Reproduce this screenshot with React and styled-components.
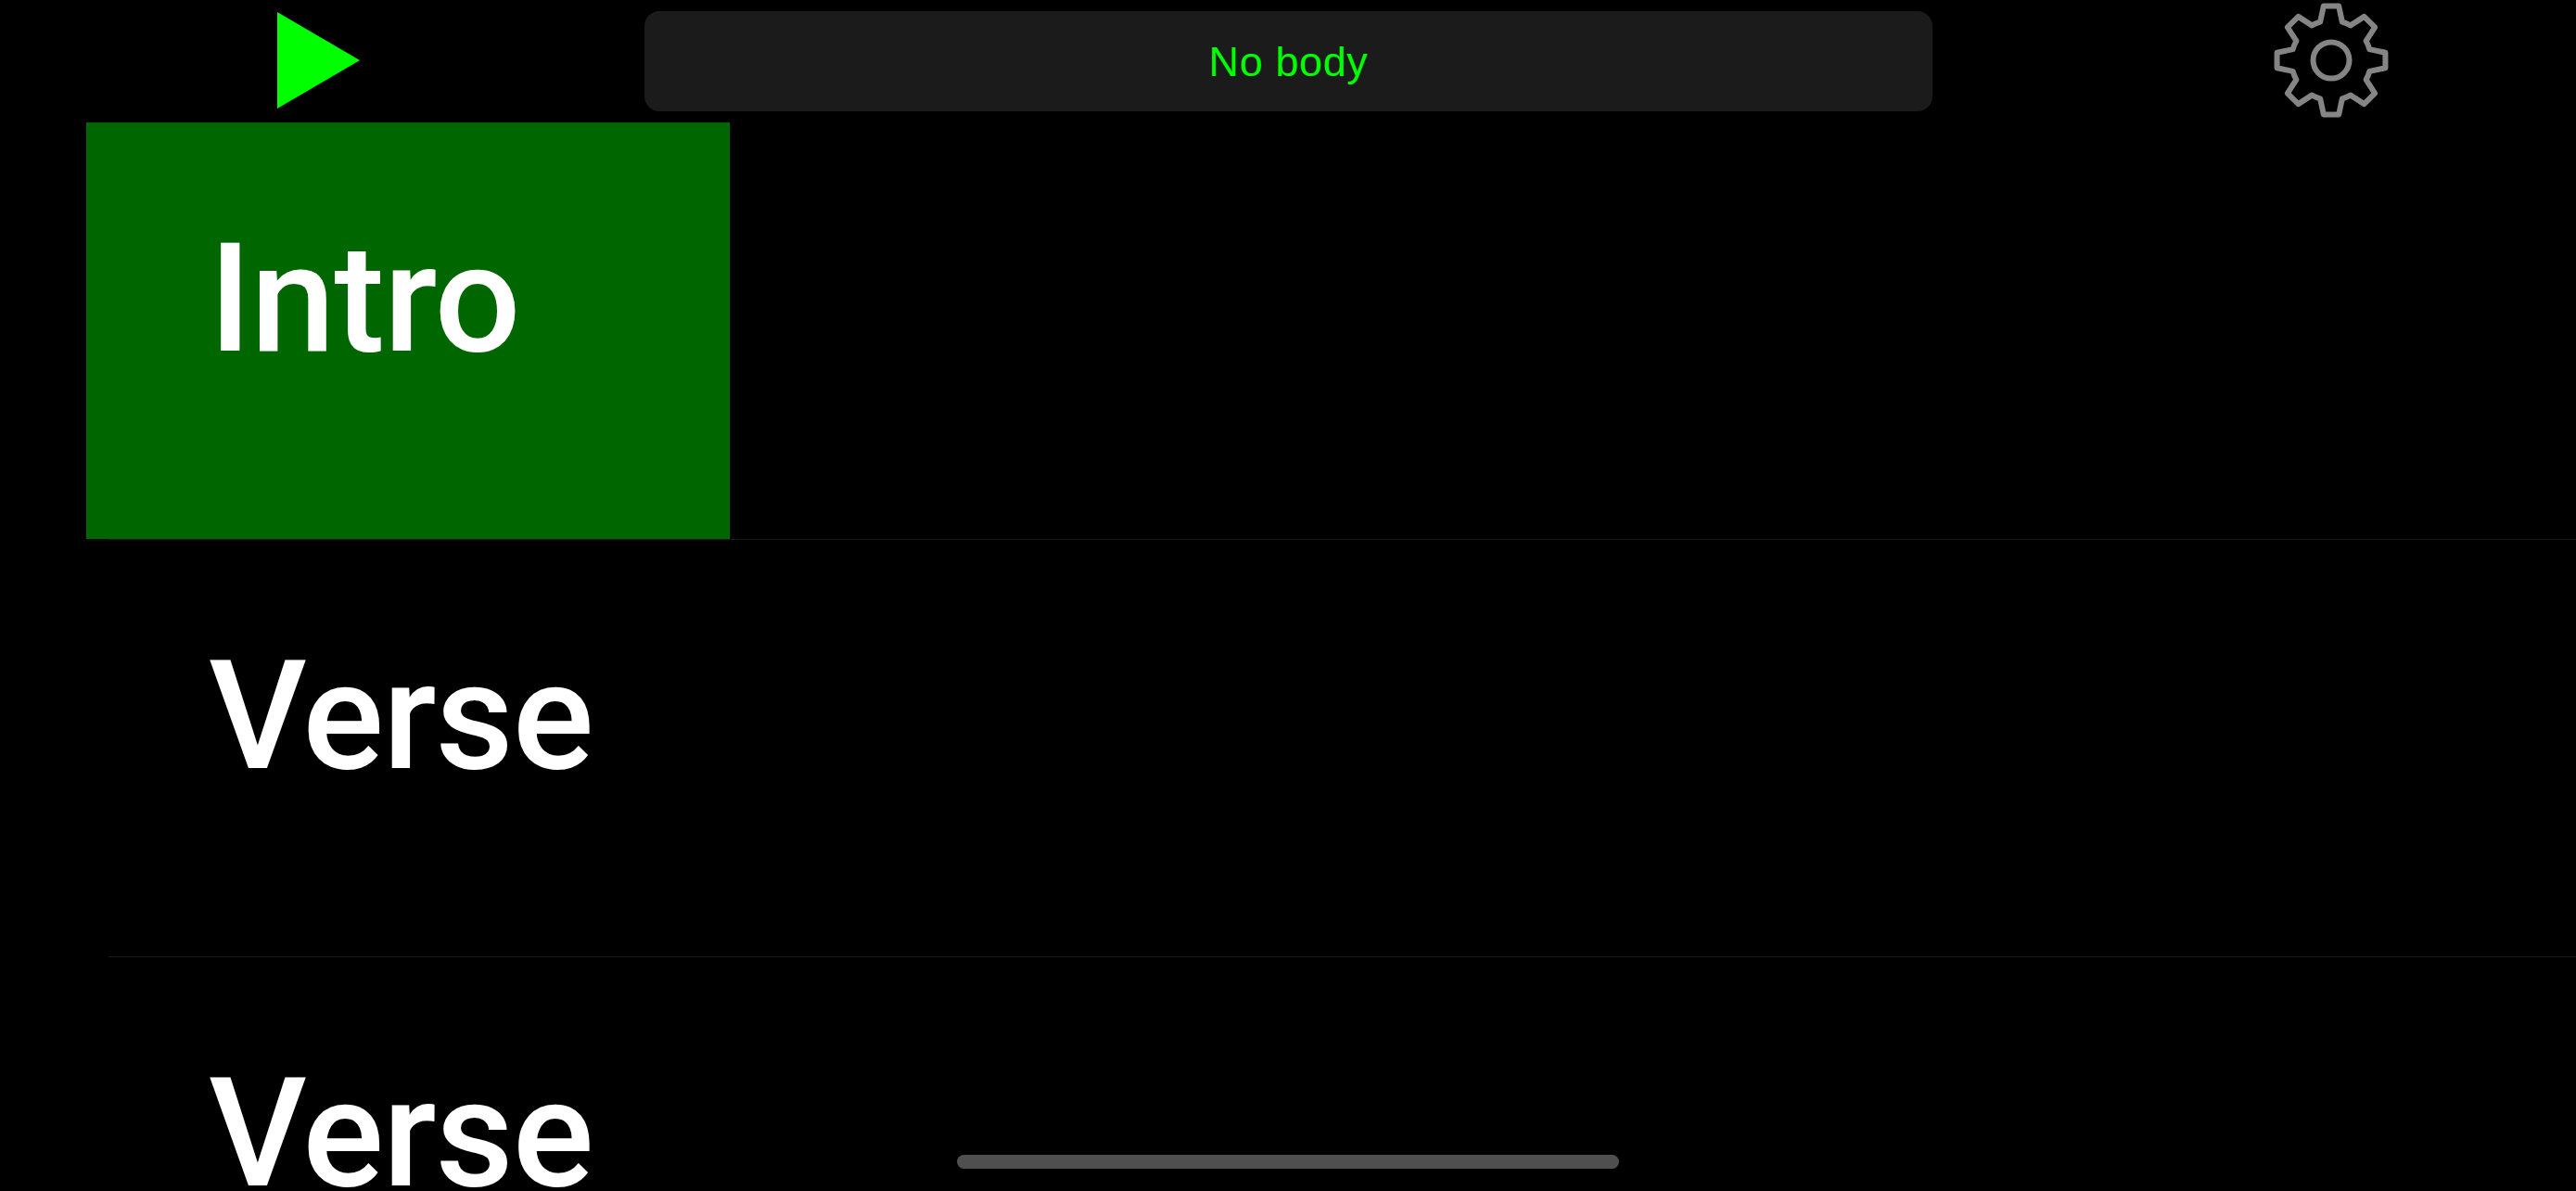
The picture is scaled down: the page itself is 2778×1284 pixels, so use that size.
import React from 'react'
import styled, { createGlobalStyle } from 'styled-components'

const GlobalStyle = createGlobalStyle`
  html, body {
    margin: 0;
    padding: 0;
    background: #000;
  }
`

const Screen = styled.div`
  position: relative;
  width: 2778px;
  height: 1284px;
  overflow: hidden;
  background: #000;
  font-family: "Liberation Sans", Arial, sans-serif;
`

const Toolbar = styled.header`
  display: grid;
  grid-template-columns: 695px 1389px 694px;
  align-items: center;
  height: 132px;
`

const PlayButton = styled.div`
  display: flex;
  padding: 0 0 2px 299px;
`

const BodyField = styled.div`
  display: flex;
  align-items: center;
  justify-content: center;
  height: 108px;
  padding-top: 1px;
  box-sizing: border-box;
  border-radius: 16px;
  background: #1b1b1b;
  color: #00ff00;
  font-size: 45px;
  letter-spacing: 0.6px;
`

const SettingsButton = styled.div`
  display: flex;
  justify-content: flex-end;
  padding: 0 200px 2px 0;
`

const SectionList = styled.main`
  margin-left: 93px;
`

const SectionRow = styled.div`
  position: relative;
  height: 450px;

  &::after {
    content: '';
    position: absolute;
    left: 24px;
    right: 0;
    bottom: 0;
    height: 1px;
    background: #1a1a1a;
  }
`

const SectionCell = styled.div`
  position: relative;
  z-index: 1;
  box-sizing: border-box;
  width: 694px;
  height: 449px;
  padding: 99px 0 0 132px;
  background: ${(p) => (p.$selected ? '#006600' : 'transparent')};
  color: #fff;
  font-family: Roboto, "Liberation Sans", sans-serif;
  font-weight: 500;
  font-size: 164px;
  line-height: 183px;
  letter-spacing: -1.2px;
`

const HomeBar = styled.div`
  position: absolute;
  left: 1032px;
  bottom: 24px;
  width: 714px;
  height: 15px;
  border-radius: 8px;
  background: #4f4f4f;
`

// eight toothed gear, built around 0,0
const gearPath = () => {
  const pt = (r, deg) => {
    const a = ((deg - 90) * Math.PI) / 180
    return `${(r * Math.cos(a)).toFixed(2)} ${(r * Math.sin(a)).toFixed(2)}`
  }
  let d = ''
  for (let i = 0; i < 8; i++) {
    const c = i * 45
    d += `${i === 0 ? 'M' : 'A43 43 0 0 1'} ${pt(43, c - 16)} `
    d += `L${pt(59, c - 8)} L${pt(59, c + 8)} L${pt(43, c + 16)} `
  }
  return `${d}A43 43 0 0 1 ${pt(43, -16)}Z`
}

const sections = [
  { name: 'Intro', selected: true },
  { name: 'Verse' },
  { name: 'Verse' }
]

const App = () => (
  <Screen>
    <GlobalStyle />
    <Toolbar>
      <PlayButton>
        <svg width="89" height="104" viewBox="0 0 89 104">
          <polygon points="0,0 89,52 0,104" fill="#00ff00" />
        </svg>
      </PlayButton>
      <BodyField>No body</BodyField>
      <SettingsButton>
        <svg width="128" height="128" viewBox="-64 -64 128 128" fill="none" stroke="#858585" strokeWidth="6" strokeLinejoin="round">
          <path d={gearPath()} />
          <circle r="19.5" />
        </svg>
      </SettingsButton>
    </Toolbar>
    <SectionList>
      {sections.map((s, i) => (
        <SectionRow key={i}>
          <SectionCell $selected={s.selected}>{s.name}</SectionCell>
        </SectionRow>
      ))}
    </SectionList>
    <HomeBar />
  </Screen>
)

export default App
